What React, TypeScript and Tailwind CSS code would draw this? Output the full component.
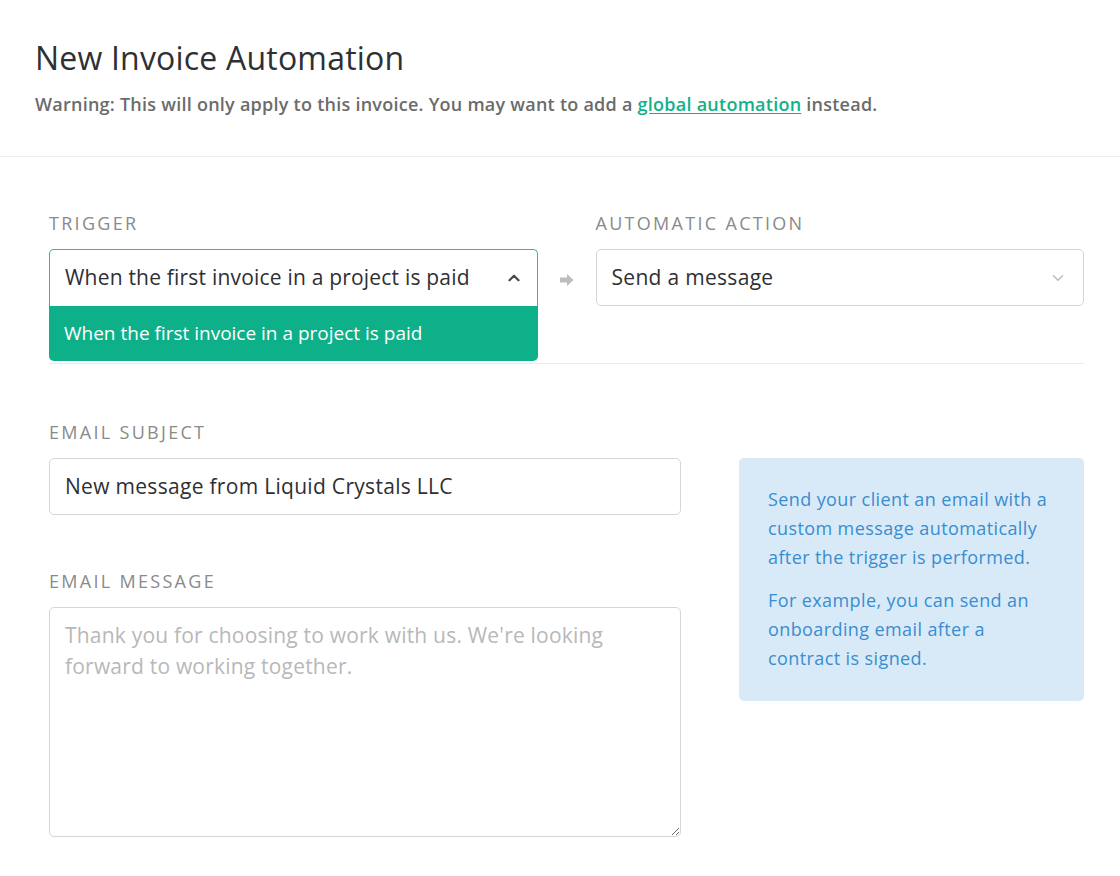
import { ChevronDown, ChevronUp } from 'lucide-react';

const font = { fontFamily: '"Open Sans", Lato, Arial, sans-serif' };

function Label({ children }: { children: React.ReactNode }) {
  return (
    <div className="text-[18px] leading-5 tracking-[2.3px] uppercase text-[#8a8a8a] mb-[16px]">
      {children}
    </div>
  );
}

export default function App() {
  return (
    <div className="min-h-[876px] w-[1120px] bg-white text-[#2e3033]" style={font}>
      <div className="px-[35px] pt-[38px] pb-[40px] border-b border-[#eef0f0]">
        <h1 className="text-[32px] leading-10 tracking-[0.2px] font-normal text-[#2e3033]">New Invoice Automation</h1>
        <p className="mt-[14px] text-[18px] leading-6 tracking-[0.25px] font-semibold text-[#6b6b6b]">
          Warning: This will only apply to this invoice. You may want to add a{' '}
          <a href="#" className="text-[#10b189] underline underline-offset-2">global automation</a> instead.
        </p>
      </div>

      <div className="pl-[49px] pr-[36px] pt-[56px]">
        <div className="grid grid-cols-[1fr_58px_1fr] pb-[57px] border-b border-[#e8eeee]">
          <div>
            <Label>Trigger</Label>
            <div className="relative">
              <div className="h-[57px] flex items-center justify-between pl-[15px] pr-[14px] border border-[#2bbd9a] rounded-t-[5px] border-b-0 bg-white">
                <span className="text-[21px] tracking-[0.2px] text-[#2e3033]">When the first invoice in a project is paid</span>
                <ChevronUp size={18} strokeWidth={3} className="text-[#4a4a4a]" />
              </div>
              <div className="absolute left-0 right-0 top-[57px] h-[55px] flex items-center px-[15px] bg-[#0db089] rounded-b-[5px] text-white text-[19px]">
                When the first invoice in a project is paid
              </div>
            </div>
          </div>
          <div className="flex items-end justify-center pb-[19px]">
            <svg width="16" height="14" viewBox="0 0 16 14">
              <path d="M1 4.5h7V1l6.5 6L8 13V9.5H1z" fill="#bdbdbd" />
            </svg>
          </div>
          <div>
            <Label>Automatic action</Label>
            <div className="h-[57px] flex items-center justify-between pl-[15px] pr-[16px] border border-[#d6d6d6] rounded-[5px]">
              <span className="text-[21px] tracking-[0.3px] text-[#2e3033]">Send a message</span>
              <ChevronDown size={18} strokeWidth={2} className="text-[#bcbcbc]" />
            </div>
          </div>
        </div>

        <div className="flex gap-[58px] pt-[58px]">
          <div className="w-[632px]">
            <Label>Email subject</Label>
            <div className="h-[57px] flex items-center px-[15px] border border-[#d6d6d6] rounded-[5px] text-[21px] tracking-[0.3px] text-[#2e3033]">
              New message from Liquid Crystals LLC
            </div>
            <div className="mt-[56px]">
              <Label>Email message</Label>
              <textarea
                className="block w-full h-[230px] px-[15px] py-[12px] border border-[#d6d6d6] rounded-[5px] text-[21px] tracking-[0.2px] leading-[31px] text-[#2e3033] placeholder:text-[#b8b8b8] outline-none"
                placeholder="Thank you for choosing to work with us. We're looking forward to working together."
                style={font}
              />
            </div>
          </div>
          <div className="flex-1 pt-[36px]">
            <div className="bg-[#d8eaf8] rounded-[5px] px-[29px] pt-[27px] pb-[28px] text-[18px] tracking-[0.4px] leading-[29px] text-[#3a8dcf]">
              <p>Send your client an email with a custom message automatically after the trigger is performed.</p>
              <p className="mt-[14px]">For example, you can send an onboarding email after a contract is signed.</p>
            </div>
          </div>
        </div>
      </div>
    </div>
  );
}
